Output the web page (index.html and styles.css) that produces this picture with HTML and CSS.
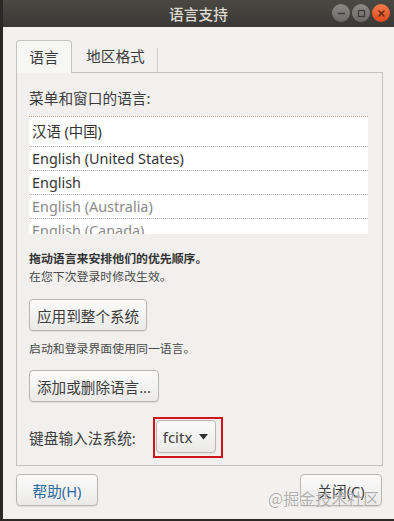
FILE: index.html
```html
<!DOCTYPE html>
<html lang="zh-CN">
<head>
  <meta charset="UTF-8" />
  <title>语言支持</title>
  <link rel="stylesheet" href="styles.css">
</head>
<body>
  <div class="window">
    <div class="titlebar">
      <span class="title">语言支持</span>
      <div class="controls">
        <span class="ctl ctl-min"><svg width="9" height="9" viewBox="0 0 9 9"><path d="M1 4.5h7" stroke="#3a3935" stroke-width="1.4"/></svg></span>
        <span class="ctl ctl-max"><svg width="9" height="9" viewBox="0 0 9 9"><rect x="1.5" y="1.5" width="6" height="6" fill="none" stroke="#3a3935" stroke-width="1.2"/></svg></span>
        <span class="ctl ctl-close"><svg width="9" height="9" viewBox="0 0 9 9"><path d="M1.5 1.5l6 6M7.5 1.5l-6 6" stroke="#5a2a18" stroke-width="1.4"/></svg></span>
      </div>
    </div>

    <div class="content">
      <div class="tabs">
        <div class="tab active">语言</div>
        <div class="tab">地区格式</div>
      </div>

      <div class="panel">
        <div class="label">菜单和窗口的语言:</div>
        <div class="lang-list">
          <div class="row first">汉语 (中国)</div>
          <div class="row">English (United States)</div>
          <div class="row">English</div>
          <div class="row muted">English (Australia)</div>
          <div class="row muted">English (Canada)</div>
        </div>

        <p class="hint strong">拖动语言来安排他们的优先顺序。</p>
        <p class="hint">在您下次登录时修改生效。</p>

        <button class="btn btn-apply">应用到整个系统</button>
        <p class="hint note">启动和登录界面使用同一语言。</p>
        <button class="btn btn-add">添加或删除语言...</button>

        <div class="im-row">
          <span class="label">键盘输入法系统:</span>
          <div class="highlight">
            <button class="btn combo">fcitx <svg width="9" height="6" viewBox="0 0 9 6"><path d="M0 0h9L4.5 5.5z" fill="#2e2e2e"/></svg></button>
          </div>
        </div>
      </div>

      <div class="footer">
        <button class="btn btn-help">帮助(H)</button>
        <button class="btn btn-close">关闭(C)</button>
      </div>
    </div>

    <div class="watermark">@掘金技术社区</div>
  </div>
</body>
</html>
```

FILE: styles.css
```css
* {
  margin: 0;
  padding: 0;
  box-sizing: border-box;
}

body {
  background: #2a2926;
  width: 394px;
  height: 521px;
  overflow: hidden;
  font-family: 'Noto Sans', 'Noto Sans CJK SC', sans-serif;
  color: #3c3c3c;
}

.window {
  position: relative;
  margin-left: 3px;
  width: 391px;
  height: 519px;
  background: #f2f1f0;
}

.titlebar {
  position: relative;
  height: 27px;
  background: linear-gradient(to bottom, #4a4843, #3a3935);
  display: flex;
  align-items: center;
  justify-content: center;
}

.title {
  color: #dfdbd2;
  font-size: 14.7px;
  font-weight: 500;
}

.controls {
  position: absolute;
  right: 4px;
  top: 4px;
  display: flex;
  gap: 2px;
}

.ctl {
  width: 18px;
  height: 18px;
  border-radius: 50%;
  display: flex;
  align-items: center;
  justify-content: center;
  background: linear-gradient(to bottom, #8a8984, #6b6a66);
}

.ctl-close {
  background: linear-gradient(to bottom, #f47a4c, #e0491d);
}

.content {
  padding: 13px 11px 0 13px;
}

.tabs {
  display: flex;
  height: 32px;
  align-items: flex-end;
}

.tab {
  font-size: 14.7px;
  color: #3c3c3c;
}

.tab.active {
  height: 33px;
  line-height: 33px;
  width: 56px;
  text-align: center;
  border: 1px solid #c6c3bf;
  border-bottom: none;
  border-radius: 4px 4px 0 0;
  background: #f6f6f5;
  margin-bottom: -1px;
  position: relative;
}

.tab + .tab {
  height: 24px;
  line-height: 16px;
  padding: 0 12px 0 14px;
  border-right: 1px solid #d2cfcb;
}

.panel {
  border: 1px solid #c6c3bf;
  height: 394px;
  padding: 15px 12px 0 12px;
  background: #f1f0ef;
}

.label {
  font-size: 14.7px;
  line-height: 20px;
  color: #3c3c3c;
}

.lang-list {
  margin-top: 8px;
  height: 118px;
  width: 339px;
  overflow: hidden;
  background: #fff;
}

.row {
  height: 24px;
  line-height: 23px;
  padding-left: 3px;
  font-size: 14.4px;
  border-top: 1px dotted #a8a6a3;
  color: #333;
}

.row.first {
  height: 30px;
  line-height: 29px;
  border-top-color: #c99b7f;
}

.row.muted {
  color: #8a8a8a;
}

.hint {
  font-size: 11.9px;
  line-height: 18px;
  color: #4a4a4a;
}

.hint.strong {
  margin-top: 15px;
  font-weight: bold;
  color: #333;
}

.hint.note {
  margin-top: 8px;
}

.btn {
  display: block;
  font-family: 'Noto Sans', 'Noto Sans CJK SC', sans-serif;
  font-size: 14.7px;
  color: #3c3c3c;
  height: 32px;
  padding: 0 7px;
  white-space: nowrap;
  border: 1px solid #b9b6b1;
  border-radius: 4px;
  background: linear-gradient(to bottom, #fbfbfb, #ebeae9);
  box-shadow: 0 1px 1px rgba(0, 0, 0, 0.08);
}

.btn-apply {
  margin-top: 14px;
  font-size: 14.6px;
}

.btn-add {
  margin-top: 13px;
  font-size: 14.6px;
}

.im-row {
  margin-top: 15px;
  display: flex;
  align-items: center;
  gap: 17px;
}

.highlight {
  border: 2px solid #d0141c;
  padding: 1px 5px 3px 1px;
  height: 41px;
  width: 70px;
}

.combo {
  display: flex;
  align-items: center;
  gap: 7px;
  width: 60px;
  height: 33px;
  padding: 0 6px;
  font-size: 15px;
}

.footer {
  display: flex;
  justify-content: space-between;
  margin-top: 8px;
  padding-right: 1px;
}

.btn-help,
.btn-close {
  width: 82px;
  height: 32px;
}

.btn-help {
  color: #2c6aa2;
}

.watermark {
  position: absolute;
  left: 265px;
  top: 486px;
  font-family: 'Noto Sans CJK SC', sans-serif;
  font-size: 16px;
  color: rgba(150, 150, 150, 0.75);
  text-shadow: 0 0 1px #fff;
}
```
